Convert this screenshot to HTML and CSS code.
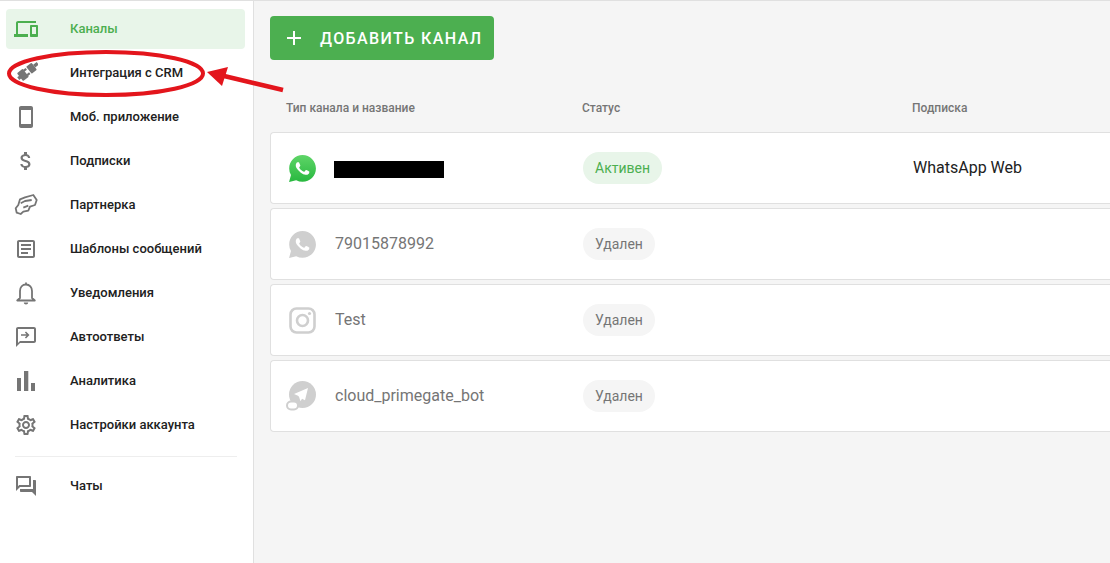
FILE: index.html
```html
<!DOCTYPE html>
<html lang="en">
<head>
    <meta charset="UTF-8">
    <title>Каналы</title>
    <link rel="stylesheet" href="styles.css">
</head>
<body>
    <aside class="sidebar">
        <nav class="menu">
            <a class="menu-item active">
                <svg class="menu-icon" viewBox="0 0 24 24"><path d="M4 6h18V4H4c-1.1 0-2 .9-2 2v11H0v3h14v-3H4V6zm19 2h-6c-.55 0-1 .45-1 1v10c0 .55.45 1 1 1h6c.55 0 1-.45 1-1V9c0-.55-.45-1-1-1zm-1 9h-4v-7h4v7z"/></svg>
                <span>Каналы</span>
            </a>
            <a class="menu-item">
                <svg class="menu-icon" viewBox="0 0 24 24"><g transform="rotate(52 14 10) translate(-1.700 -1.200) scale(1.120)"><rect x="12.500" y="-1" width="3" height="4"/><rect x="10" y="3" width="8" height="6" rx=".8"/><rect x="10.500" y="10" width="2" height="3"/><rect x="15.500" y="10" width="2" height="3"/><rect x="9.500" y="12.500" width="9" height="6.500" rx=".8"/><rect x="12.500" y="18" width="3" height="3"/></g></svg>
                <span>Интеграция с CRM</span>
            </a>
            <a class="menu-item">
                <svg class="menu-icon" viewBox="0 0 24 24"><path d="M17 1.01L7 1c-1.1 0-2 .9-2 2v18c0 1.1.9 2 2 2h10c1.1 0 2-.9 2-2V3c0-1.1-.9-1.99-2-1.99zM17 19H7V5h10v14z"/></svg>
                <span>Моб. приложение</span>
            </a>
            <a class="menu-item">
                <svg class="menu-icon" viewBox="0 0 24 24"><path d="M11.8 10.9c-2.27-.59-3-1.2-3-2.15 0-1.09 1.01-1.85 2.7-1.85 1.78 0 2.44.85 2.5 2.1h2.21c-.07-1.72-1.12-3.3-3.21-3.81V3h-3v2.16c-1.94.42-3.5 1.68-3.5 3.61 0 2.31 1.91 3.46 4.7 4.13 2.5.6 3 1.48 3 2.41 0 .69-.49 1.79-2.7 1.79-2.06 0-2.87-.92-2.98-2.1h-2.2c.12 2.19 1.76 3.42 3.68 3.83V21h3v-2.15c1.95-.37 3.5-1.5 3.5-3.55 0-2.84-2.43-3.81-4.7-4.4z"/></svg>
                <span>Подписки</span>
            </a>
            <a class="menu-item">
                <svg class="menu-icon" viewBox="0 0 24 24"><path class="line" d="M11 4.300L19.300 2l3.400 5L21 12l-5 1.700-1.700 4-5 1-2.600 2.300-4-1.300-1-4.400L4.300 12 6 6.300zM6.700 10.300L11 8l6.700-1M9.300 14.700l5-2"/></svg>
                <span>Партнерка</span>
            </a>
            <a class="menu-item">
                <svg class="menu-icon" viewBox="0 0 24 24"><path d="M19 5v14H5V5h14m0-2H5c-1.1 0-2 .9-2 2v14c0 1.1.9 2 2 2h14c1.1 0 2-.9 2-2V5c0-1.1-.9-2-2-2zM14 17H7v-2h7v2zm3-4H7v-2h10v2zm0-4H7V7h10v2z"/></svg>
                <span>Шаблоны сообщений</span>
            </a>
            <a class="menu-item">
                <svg class="menu-icon" viewBox="0 0 24 24"><path class="line" d="M12 1.500v2c-3.600 0-6 2.800-6 6.500v7l-2.800 2.500h17.600L18 17v-7c0-3.700-2.400-6.500-6-6.500"/><path d="M9.800 21.500h4.400c0 1.200-1 2-2.200 2s-2.200-.8-2.200-2z"/></svg>
                <span>Уведомления</span>
            </a>
            <a class="menu-item">
                <svg class="menu-icon" viewBox="0 0 24 24"><path d="M20 2H4c-1.100 0-2 .9-2 2v18l4-4h14c1.100 0 2-.9 2-2V4c0-1.100-.9-2-2-2zm0 14H6l-2 2V4h16v12zM12 6.500l-1.100 1.100 1.600 1.600H7v1.600h5.500l-1.600 1.600 1.100 1.100 3.500-3.500z"/></svg>
                <span>Автоответы</span>
            </a>
            <a class="menu-item">
                <svg class="menu-icon" viewBox="0 0 24 24"><path d="M3 9h4v13H3zM10 2h4.300v20H10zM17 14h4v8h-4z"/></svg>
                <span>Аналитика</span>
            </a>
            <a class="menu-item">
                <svg class="menu-icon" viewBox="0 0 24 24"><path d="M19.430 12.980c.04-.32.07-.64.07-.98 0-.34-.03-.66-.07-.98l2.110-1.650c.19-.15.24-.42.12-.64l-2-3.460c-.09-.16-.26-.25-.44-.25-.06 0-.12.01-.17.03l-2.490 1c-.52-.4-1.080-.73-1.690-.98l-.38-2.650C14.460 2.180 14.250 2 14 2h-4c-.25 0-.46.18-.49.42l-.38 2.650c-.61.25-1.170.59-1.690.98l-2.490-1c-.06-.02-.12-.03-.18-.03-.17 0-.34.09-.43.25l-2 3.460c-.13.22-.07.49.12.64l2.110 1.650c-.04.32-.07.65-.07.98 0 .33.03.66.07.98l-2.110 1.650c-.19.15-.24.42-.12.64l2 3.460c.09.16.26.25.44.25.06 0 .12-.01.17-.03l2.490-1c.52.4 1.080.73 1.690.98l.38 2.650c.03.24.24.42.49.42h4c.25 0 .46-.18.49-.42l.38-2.650c.61-.25 1.170-.59 1.690-.98l2.490 1c.06.02.12.03.18.03.17 0 .34-.09.43-.25l2-3.460c.12-.22.07-.49-.12-.64l-2.110-1.650zm-1.980-1.710c.04.31.05.52.05.73 0 .21-.02.43-.05.73l-.14 1.130.89.7 1.080.84-.7 1.210-1.270-.51-1.040-.42-.9.68c-.43.32-.84.56-1.250.73l-1.060.43-.16 1.130-.2 1.350h-1.400l-.19-1.350-.16-1.130-1.060-.43c-.43-.18-.83-.41-1.230-.71l-.91-.7-1.060.43-1.270.51-.7-1.210 1.080-.84.89-.7-.14-1.130c-.03-.31-.05-.54-.05-.74s.02-.43.05-.73l.14-1.130-.89-.7-1.080-.84.7-1.210 1.270.51 1.040.42.9-.68c.43-.32.84-.56 1.250-.73l1.060-.43.16-1.130.2-1.350h1.390l.19 1.350.16 1.130 1.060.43c.43.18.83.41 1.230.71l.91.7 1.060-.43 1.270-.51.7 1.210-1.070.85-.89.7.14 1.130zM12 8c-2.210 0-4 1.790-4 4s1.790 4 4 4 4-1.790 4-4-1.790-4-4-4zm0 6c-1.100 0-2-.9-2-2s.9-2 2-2 2 .9 2 2-.9 2-2 2z"/></svg>
                <span>Настройки аккаунта</span>
            </a>
            <div class="menu-divider"></div>
            <a class="menu-item">
                <svg class="menu-icon" viewBox="0 0 24 24"><path d="M15 4v7H5.170L4 12.170V4h11m1-2H3c-.55 0-1 .45-1 1v14l4-4h10c.55 0 1-.45 1-1V3c0-.55-.45-1-1-1zm5 4h-2v9H6v2c0 .55.45 1 1 1h11l4 4V7c0-.55-.45-1-1-1z"/></svg>
                <span>Чаты</span>
            </a>
        </nav>
    </aside>

    <main class="content">
        <button class="add-button">
            <svg class="add-plus" viewBox="0 0 14 14"><path d="M6 0h2v6h6v2H8v6H6V8H0V6h6z"/></svg>
            Добавить канал
        </button>

        <div class="table-head">
            <div class="col-name">Тип канала и название</div>
            <div class="col-status">Статус</div>
            <div class="col-sub">Подписка</div>
        </div>

        <div class="channel">
            <div class="col-name">
                <svg class="channel-icon" viewBox="0 0 24 24"><defs><linearGradient id="wa" x1="0" y1="0" x2="0" y2="1"><stop offset="0" stop-color="#5fd568"/><stop offset="1" stop-color="#28b83f"/></linearGradient></defs><path fill="url(#wa)" d="M.06 24l1.690-6.160A11.860 11.860 0 0 1 .16 11.890C.16 5.340 5.500 0 12.050 0c6.560 0 11.890 5.340 11.890 11.900 0 6.550-5.340 11.890-11.890 11.890a11.880 11.880 0 0 1-5.690-1.450z"/><path fill="#fff" d="M17.470 14.380c-.3-.15-1.760-.87-2.030-.97-.27-.1-.47-.15-.67.15-.2.3-.77.97-.94 1.160-.17.2-.35.22-.64.08-.3-.15-1.260-.46-2.390-1.480-.88-.79-1.480-1.760-1.650-2.060-.17-.3-.02-.46.13-.61.13-.13.3-.35.45-.52.15-.17.2-.3.3-.5.1-.2.05-.37-.03-.52-.07-.15-.67-1.610-.92-2.210-.24-.58-.49-.5-.67-.51h-.57c-.2 0-.52.07-.79.37-.27.3-1.040 1.020-1.040 2.480s1.070 2.880 1.210 3.070c.15.2 2.100 3.200 5.080 4.490.71.31 1.260.49 1.690.63.71.23 1.360.19 1.870.12.57-.09 1.760-.72 2.010-1.410.25-.7.25-1.290.17-1.410-.07-.13-.27-.2-.57-.35z"/></svg>
                <span class="redacted"></span>
            </div>
            <div class="col-status"><span class="pill pill-active">Активен</span></div>
            <div class="col-sub">WhatsApp Web</div>
        </div>

        <div class="channel deleted">
            <div class="col-name">
                <svg class="channel-icon" viewBox="0 0 24 24"><path fill="#cfcfcf" d="M.06 24l1.690-6.160A11.860 11.860 0 0 1 .16 11.890C.16 5.340 5.500 0 12.050 0c6.560 0 11.890 5.340 11.890 11.900 0 6.550-5.340 11.890-11.890 11.890a11.880 11.880 0 0 1-5.690-1.450z"/><path fill="#fff" d="M17.470 14.380c-.3-.15-1.760-.87-2.030-.97-.27-.1-.47-.15-.67.15-.2.3-.77.97-.94 1.160-.17.2-.35.22-.64.08-.3-.15-1.260-.46-2.390-1.480-.88-.79-1.480-1.760-1.650-2.060-.17-.3-.02-.46.13-.61.13-.13.3-.35.45-.52.15-.17.2-.3.3-.5.1-.2.05-.37-.03-.52-.07-.15-.67-1.610-.92-2.210-.24-.58-.49-.5-.67-.51h-.57c-.2 0-.52.07-.79.37-.27.3-1.040 1.020-1.040 2.480s1.070 2.880 1.210 3.070c.15.2 2.100 3.200 5.080 4.490.71.31 1.260.49 1.690.63.71.23 1.360.19 1.870.12.57-.09 1.760-.72 2.010-1.410.25-.7.25-1.290.17-1.410-.07-.13-.27-.2-.57-.35z"/></svg>
                <span class="channel-name">79015878992</span>
            </div>
            <div class="col-status"><span class="pill">Удален</span></div>
            <div class="col-sub"></div>
        </div>

        <div class="channel deleted">
            <div class="col-name">
                <svg class="channel-icon" viewBox="0 0 27 27"><rect x="1.500" y="1.500" width="24" height="24" rx="6" fill="none" stroke="#cfcfcf" stroke-width="2.600"/><circle cx="13.500" cy="13.500" r="5.500" fill="none" stroke="#cfcfcf" stroke-width="2.600"/><circle cx="20.500" cy="6.500" r="1.600" fill="#cfcfcf"/></svg>
                <span class="channel-name">Test</span>
            </div>
            <div class="col-status"><span class="pill">Удален</span></div>
            <div class="col-sub"></div>
        </div>

        <div class="channel deleted">
            <div class="col-name">
                <svg class="channel-icon wide" viewBox="0 0 30 30"><circle cx="16.500" cy="13.500" r="13.500" fill="#cfcfcf"/><path fill="#fff" d="M22 7L8 13l4 1.800 1 1 1.500 4.500 1.500-2.500 3 1.500z"/><rect x="1" y="20.500" width="11" height="8" rx="4" fill="#fff" stroke="#cfcfcf" stroke-width="2"/></svg>
                <span class="channel-name">cloud_primegate_bot</span>
            </div>
            <div class="col-status"><span class="pill">Удален</span></div>
            <div class="col-sub"></div>
        </div>
    </main>

    <!-- red marks drawn over the screenshot -->
    <svg class="marks" viewBox="0 0 1110 563">
        <ellipse cx="106" cy="73.500" rx="97" ry="21.500" fill="none" stroke="#e3151c" stroke-width="4"/>
        <path d="M283 90L222 75.500" stroke="#e3151c" stroke-width="4.500" fill="none"/>
        <path d="M207 72L228 67 222 86z" fill="#e3151c"/>
    </svg>
</body>
</html>
```

FILE: styles.css
```css
* {
    margin: 0;
    padding: 0;
    box-sizing: border-box;
}

body {
    font-family: Roboto, sans-serif;
    background-color: #f5f5f5;
    color: #212121;
    display: flex;
    height: 100vh;
    overflow: hidden;
    border-top: 1px solid #e0e0e0;
}

/* Sidebar */
.sidebar {
    width: 254px;
    flex-shrink: 0;
    background-color: #ffffff;
    border-right: 1px solid #e0e0e0;
    padding: 8px 8px 0 6px;
}

.menu-item {
    display: flex;
    align-items: center;
    width: 239px;
    height: 40px;
    margin-bottom: 4px;
    padding-left: 8px;
    border-radius: 4px;
    font-size: 13px;
    font-weight: 500;
    color: #212121;
}

.menu-item span {
    padding-bottom: 2px;
}

.menu-item.active {
    background-color: #e8f5e9;
    color: #4caf50;
}

.menu-icon {
    width: 24px;
    height: 24px;
    margin-right: 32px;
    fill: #757575;
}

.menu-item.active .menu-icon {
    fill: #4caf50;
}

.menu-icon .line {
    fill: none;
    stroke: #757575;
    stroke-width: 1.800;
    stroke-linejoin: round;
}

.menu-divider {
    height: 1px;
    width: 222px;
    margin: 11px 0 9px 9px;
    background-color: #eeeeee;
}

/* Content */
.content {
    flex-grow: 1;
    padding: 15px 0 0 16px;
    min-width: 0;
}

.add-button {
    display: flex;
    align-items: center;
    width: 224px;
    height: 44px;
    padding-left: 17px;
    border: none;
    border-radius: 4px;
    background-color: #4caf50;
    color: #ffffff;
    font-family: inherit;
    font-size: 16px;
    font-weight: 500;
    letter-spacing: 1.400px;
    text-transform: uppercase;
}

.add-plus {
    width: 14px;
    height: 14px;
    margin-right: 19px;
    fill: #ffffff;
}

.table-head,
.channel {
    display: flex;
    align-items: center;
}

.table-head {
    height: 72px;
    padding-top: 24px;
    font-size: 12px;
    font-weight: 500;
    color: #757575;
}

.table-head .col-name {
    padding-left: 16px;
}

.col-name {
    display: flex;
    align-items: center;
    width: 312px;
}

.col-status {
    width: 330px;
}

/* the cards run on to the right edge of the window */
.channel {
    height: 72px;
    margin-bottom: 4px;
    background-color: #ffffff;
    border: 1px solid #e0e0e0;
    border-right: none;
    border-radius: 4px 0 0 4px;
    font-size: 16px;
    color: #212121;
}

.channel .col-name {
    padding-left: 18px;
}

.channel .col-sub,
.channel-name {
    padding-bottom: 2px;
}

.channel.deleted {
    color: #757575;
}

.channel-icon {
    width: 27px;
    height: 27px;
    margin-right: 19px;
    flex-shrink: 0;
}

.channel-icon.wide {
    width: 30px;
    height: 30px;
    margin-left: -3px;
}

.redacted {
    display: block;
    width: 110px;
    height: 17px;
    margin-left: -1px;
    margin-top: 2px;
    background-color: #000000;
}

.pill {
    display: inline-block;
    height: 32px;
    padding: 0 12px;
    border-radius: 16px;
    background-color: #f5f5f5;
    color: #757575;
    font-size: 14px;
    line-height: 32px;
}

.pill-active {
    background-color: #e8f5e9;
    color: #4caf50;
}

/* red annotation over the page */
.marks {
    position: absolute;
    top: 0;
    left: 0;
    width: 1110px;
    height: 563px;
    pointer-events: none;
}
```
